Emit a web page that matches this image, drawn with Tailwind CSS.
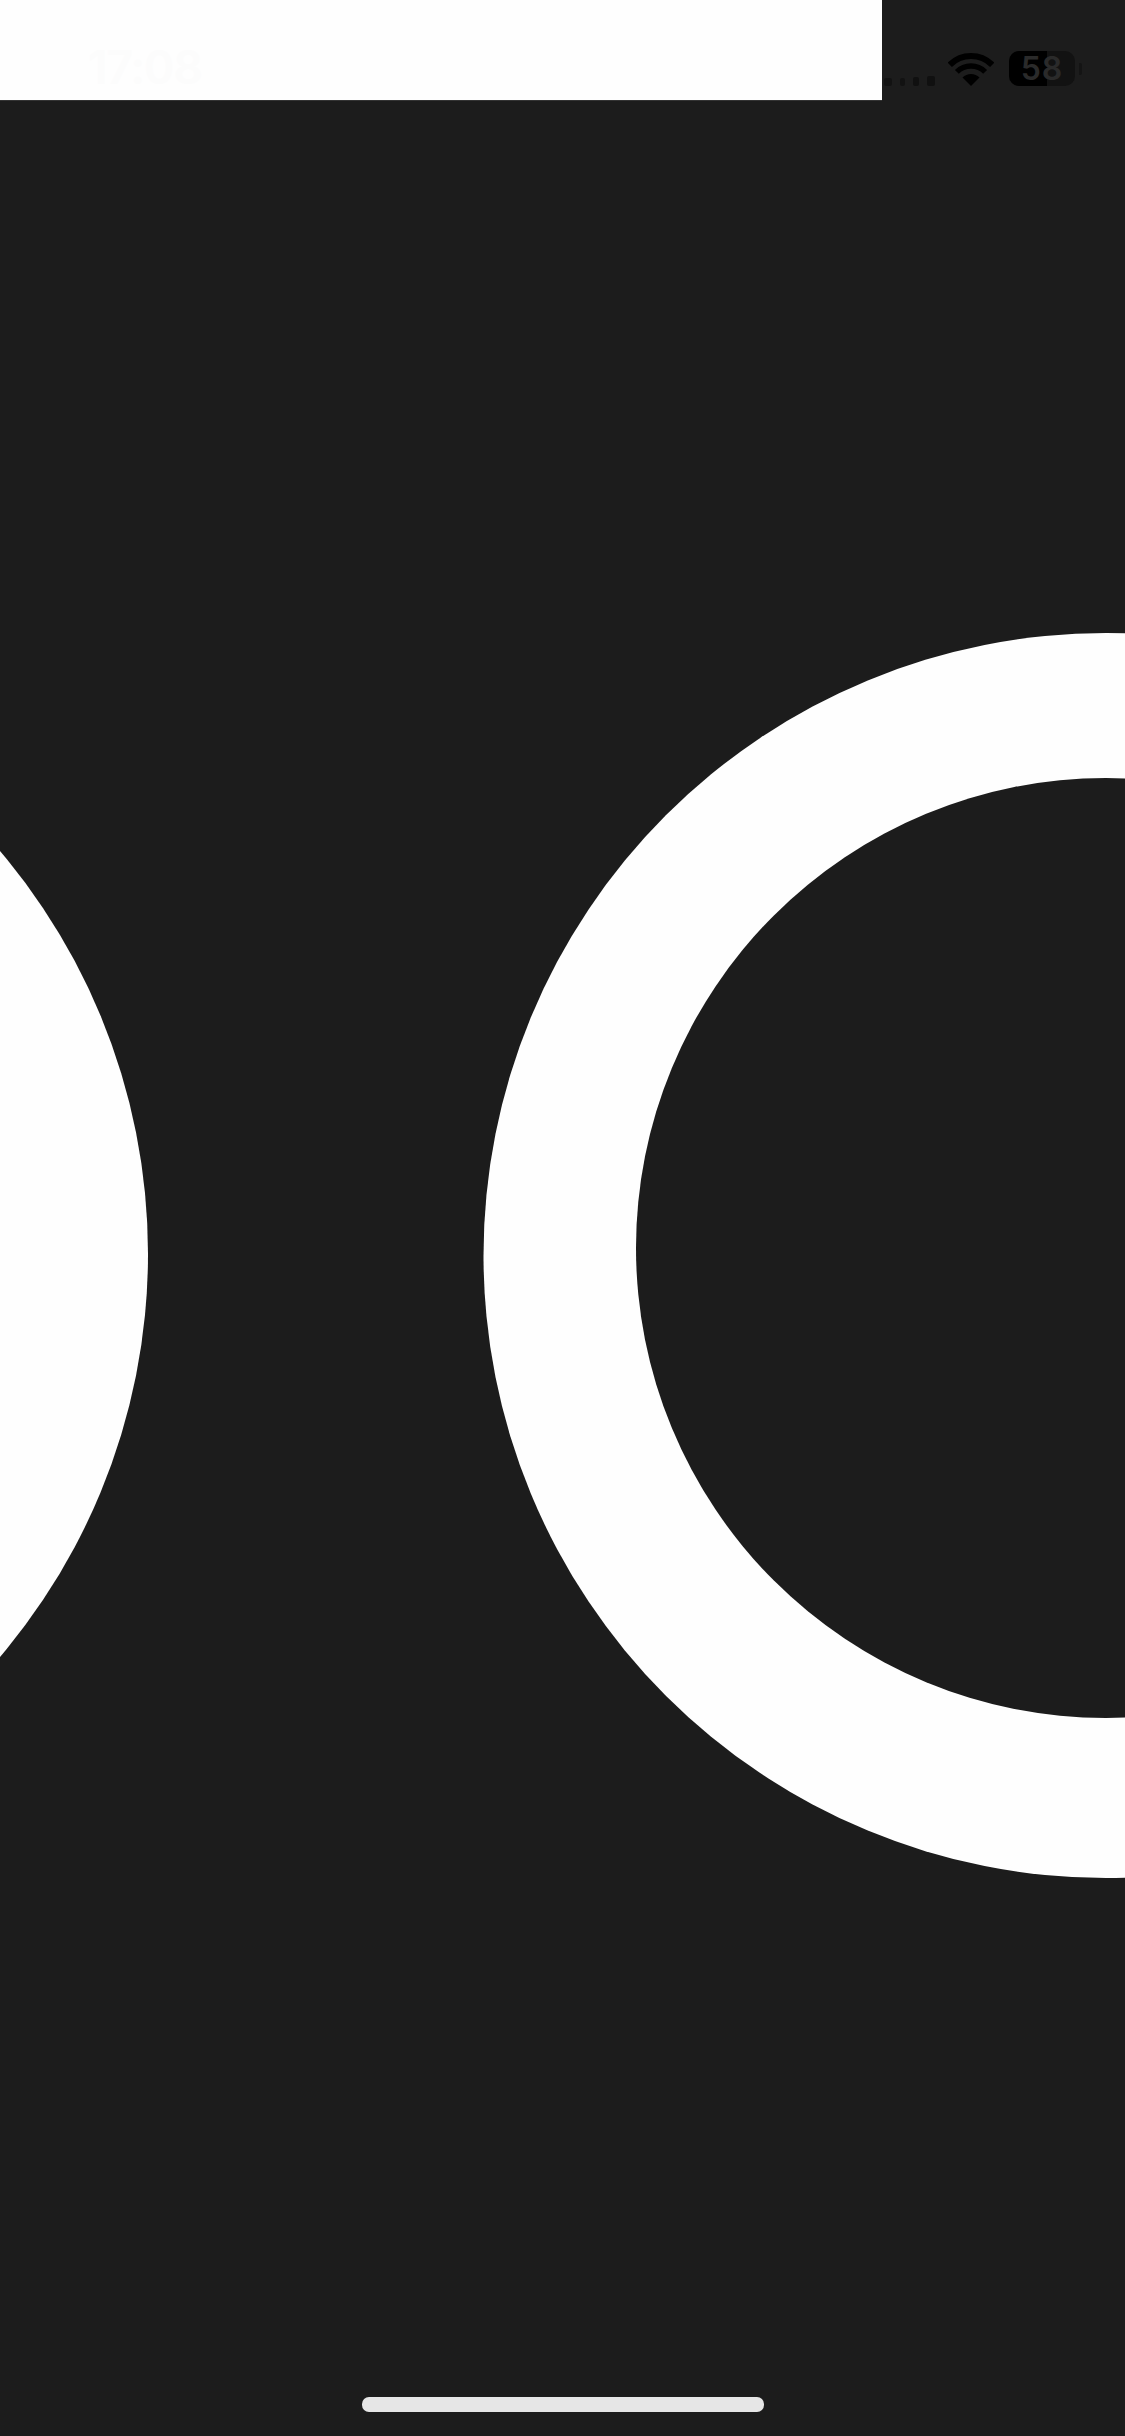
<!DOCTYPE html>
<html lang="en">
<head>
    <meta charset="UTF-8">
    <meta name="viewport" content="width=device-width, initial-scale=1.0">
    <title>Timer</title>
    <script src="https://cdn.jsdelivr.net/npm/@tailwindcss/browser@4"></script>
</head>
<body class="bg-[#1c1c1c]">

    <div class="relative w-[1125px] h-[2436px] overflow-hidden bg-[#1c1c1c] flex flex-col justify-between font-['Inter',sans-serif]">

        <!-- huge digits running off both sides -->
        <svg class="absolute inset-0" width="1125" height="2436" viewBox="0 0 1125 2436">
            <circle cx="-474.5" cy="1254" r="622.5" fill="#fefefe"/>
            <circle cx="1106" cy="1255.5" r="622.5" fill="#fefefe"/>
            <circle cx="1106" cy="1248" r="470" fill="#1c1c1c"/>
        </svg>

        <!-- status bar -->
        <div class="relative flex items-start">
            <div class="w-[882px] h-[101px] bg-[#fefefe] border-b border-[#333333] pl-[88px] pt-[41px]">
                <span class="text-[46px] leading-[53px] font-semibold tracking-[-1px] text-[#fcfcfc]">17:08</span>
            </div>
            <div class="flex items-end h-[86px] pl-[2px]">
                <div class="flex items-end justify-between w-[51px] h-[11px]">
                    <span class="w-[8px] h-[8px] rounded-[2px] bg-[#121212]"></span>
                    <span class="w-[5px] h-[8px] rounded-[2px] bg-[#121212]"></span>
                    <span class="w-[6px] h-[9px] rounded-[2px] bg-[#101010]"></span>
                    <span class="w-[8px] h-[10px] rounded-[2px] bg-[#101010]"></span>
                </div>
                <svg class="ml-[13px]" width="46" height="33" viewBox="0 0 46 33" fill="none">
                    <path d="M1.8 11.8A30 30 0 0 1 44.2 11.8" stroke="#000" stroke-width="6"/>
                    <path d="M8.86 18.86A20 20 0 0 1 37.14 18.86" stroke="#000" stroke-width="5.5"/>
                    <path d="M23 33L14.5 24.5A12 12 0 0 1 31.5 24.5Z" fill="#000"/>
                </svg>
                <div class="relative ml-[15px] w-[66px] h-[35px] rounded-[10px] bg-[#121212] flex items-center justify-center">
                    <div class="absolute left-0 top-0 bottom-0 w-[38px] rounded-l-[10px] bg-black"></div>
                    <span class="relative text-[32px] leading-none font-semibold tracking-[1px] text-[#2a2a2a]">58</span>
                </div>
                <div class="ml-[4px] mb-[11px] w-[3px] h-[12px] rounded-r-[2px] bg-[#141414]"></div>
            </div>
        </div>

        <!-- home indicator -->
        <div class="relative flex justify-center pb-[24px]">
            <div class="w-[402px] h-[15px] rounded-[7px] bg-[#e6e6e6]"></div>
        </div>
    </div>

</body>
</html>
